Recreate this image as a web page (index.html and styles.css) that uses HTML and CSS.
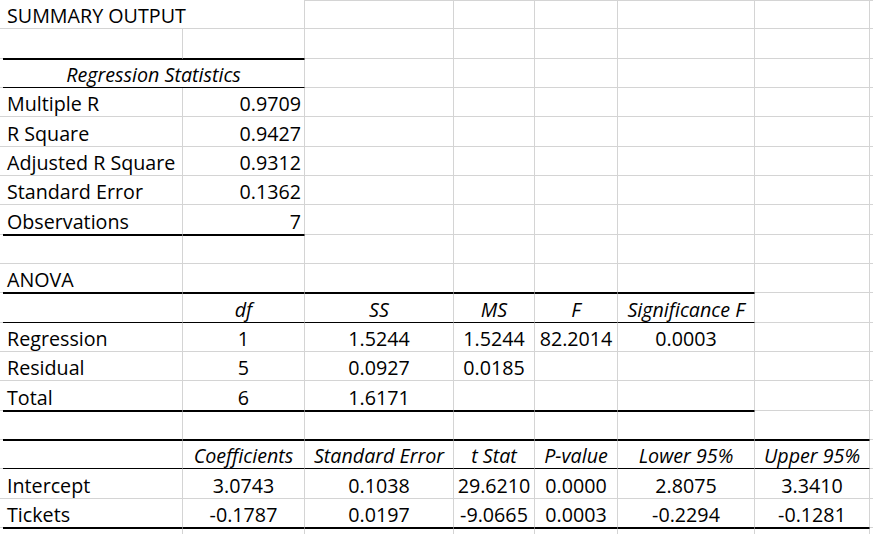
FILE: index.html
```html
<!DOCTYPE html>
<html>
<head>
<meta charset="utf-8">
<title>Summary Output</title>
<link rel="stylesheet" href="styles.css">
</head>
<body>
<div class="sheet">
  <div class="row">
    <div class="c g"></div><div class="c span2">SUMMARY OUTPUT</div><div class="c t"></div><div class="c t"></div><div class="c t"></div><div class="c t"></div><div class="c t"></div><div class="c t h"></div>
  </div>
  <div class="row">
    <div class="c g"></div><div class="c bb"></div><div class="c bb"></div><div class="c"></div><div class="c"></div><div class="c"></div><div class="c"></div><div class="c"></div><div class="c h"></div>
  </div>
  <div class="row">
    <div class="c g"></div><div class="c span2 m i bt bb">Regression Statistics</div><div class="c"></div><div class="c"></div><div class="c"></div><div class="c"></div><div class="c"></div><div class="c h"></div>
  </div>
  <div class="row">
    <div class="c g"></div><div class="c">Multiple R</div><div class="c r">0.9709</div><div class="c"></div><div class="c"></div><div class="c"></div><div class="c"></div><div class="c"></div><div class="c h"></div>
  </div>
  <div class="row">
    <div class="c g"></div><div class="c">R Square</div><div class="c r">0.9427</div><div class="c"></div><div class="c"></div><div class="c"></div><div class="c"></div><div class="c"></div><div class="c h"></div>
  </div>
  <div class="row">
    <div class="c g"></div><div class="c">Adjusted R Square</div><div class="c r">0.9312</div><div class="c"></div><div class="c"></div><div class="c"></div><div class="c"></div><div class="c"></div><div class="c h"></div>
  </div>
  <div class="row">
    <div class="c g"></div><div class="c">Standard Error</div><div class="c r">0.1362</div><div class="c"></div><div class="c"></div><div class="c"></div><div class="c"></div><div class="c"></div><div class="c h"></div>
  </div>
  <div class="row">
    <div class="c g"></div><div class="c bb">Observations</div><div class="c r bb">7</div><div class="c"></div><div class="c"></div><div class="c"></div><div class="c"></div><div class="c"></div><div class="c h"></div>
  </div>
  <div class="row">
    <div class="c g"></div><div class="c bt"></div><div class="c bt"></div><div class="c"></div><div class="c"></div><div class="c"></div><div class="c"></div><div class="c"></div><div class="c h"></div>
  </div>
  <div class="row">
    <div class="c g"></div><div class="c bb">ANOVA</div><div class="c bb"></div><div class="c bb"></div><div class="c bb"></div><div class="c bb"></div><div class="c bb"></div><div class="c"></div><div class="c h"></div>
  </div>
  <div class="row">
    <div class="c g"></div><div class="c bt bb"></div><div class="c m i bt bb">df</div><div class="c m i bt bb">SS</div><div class="c m i bt bb">MS</div><div class="c m i bt bb">F</div><div class="c m i bt bb">Significance F</div><div class="c"></div><div class="c h"></div>
  </div>
  <div class="row">
    <div class="c g"></div><div class="c">Regression</div><div class="c m">1</div><div class="c m">1.5244</div><div class="c m">1.5244</div><div class="c m">82.2014</div><div class="c m">0.0003</div><div class="c"></div><div class="c h"></div>
  </div>
  <div class="row">
    <div class="c g"></div><div class="c">Residual</div><div class="c m">5</div><div class="c m">0.0927</div><div class="c m">0.0185</div><div class="c"></div><div class="c"></div><div class="c"></div><div class="c h"></div>
  </div>
  <div class="row">
    <div class="c g"></div><div class="c bb">Total</div><div class="c m bb">6</div><div class="c m bb">1.6171</div><div class="c bb"></div><div class="c bb"></div><div class="c bb"></div><div class="c"></div><div class="c h"></div>
  </div>
  <div class="row">
    <div class="c g"></div><div class="c bt bb"></div><div class="c bt bb"></div><div class="c bt bb"></div><div class="c bt bb"></div><div class="c bt bb"></div><div class="c bt bb"></div><div class="c bb"></div><div class="c h"></div>
  </div>
  <div class="row">
    <div class="c g"></div><div class="c bt bb"></div><div class="c m i bt bb">Coefficients</div><div class="c m i bt bb">Standard Error</div><div class="c m i bt bb">t Stat</div><div class="c m i bt bb">P-value</div><div class="c m i bt bb">Lower 95%</div><div class="c m i bt bb">Upper 95%</div><div class="c h"></div>
  </div>
  <div class="row">
    <div class="c g"></div><div class="c">Intercept</div><div class="c m">3.0743</div><div class="c m">0.1038</div><div class="c m">29.6210</div><div class="c m">0.0000</div><div class="c m">2.8075</div><div class="c m">3.3410</div><div class="c h"></div>
  </div>
  <div class="row">
    <div class="c g"></div><div class="c bb">Tickets</div><div class="c m bb">-0.1787</div><div class="c m bb">0.0197</div><div class="c m bb">-9.0665</div><div class="c m bb">0.0003</div><div class="c m bb">-0.2294</div><div class="c m bb">-0.1281</div><div class="c h"></div>
  </div>
  <div class="row">
    <div class="c g"></div><div class="c bt"></div><div class="c bt"></div><div class="c bt"></div><div class="c bt"></div><div class="c bt"></div><div class="c bt"></div><div class="c bt"></div><div class="c h"></div>
  </div>
</div>
</body>
</html>
```
FILE: styles.css
```css
html, body {
  margin: 0;
  padding: 0;
  background: #ffffff;
}

body {
  width: 873px;
  height: 534px;
  overflow: hidden;
}

.sheet {
  display: grid;
  grid-template-columns: 3px 180px 122px 149px 81px 83px 137px 115px 40px;
  grid-auto-rows: 29.333px;
  font-family: "Open Sans", "Liberation Sans", sans-serif;
  font-size: 19.7px;
  color: #000000;
}

.row {
  display: contents;
}

.c {
  box-sizing: border-box;
  display: flex;
  align-items: flex-end;
  justify-content: flex-start;
  padding: 0 3px 2px 4px;
  line-height: 20px;
  white-space: nowrap;
  border-right: 1px solid #d4d4d4;
  border-bottom: 1px solid #d4d4d4;
  min-width: 0;
}

.g {
  border-right: none;
  padding: 0;
}

.h {
  border-right: none;
}

.span2 {
  grid-column: span 2;
}

.t {
  border-top: 1px solid #d4d4d4;
}

.r {
  justify-content: flex-end;
}

.m {
  justify-content: center;
  padding-left: 0;
  padding-right: 0;
}

.i {
  font-style: italic;
}

.bb {
  border-bottom-color: #000000;
}

.bt {
  border-top: 1px solid #000000;
}
```
